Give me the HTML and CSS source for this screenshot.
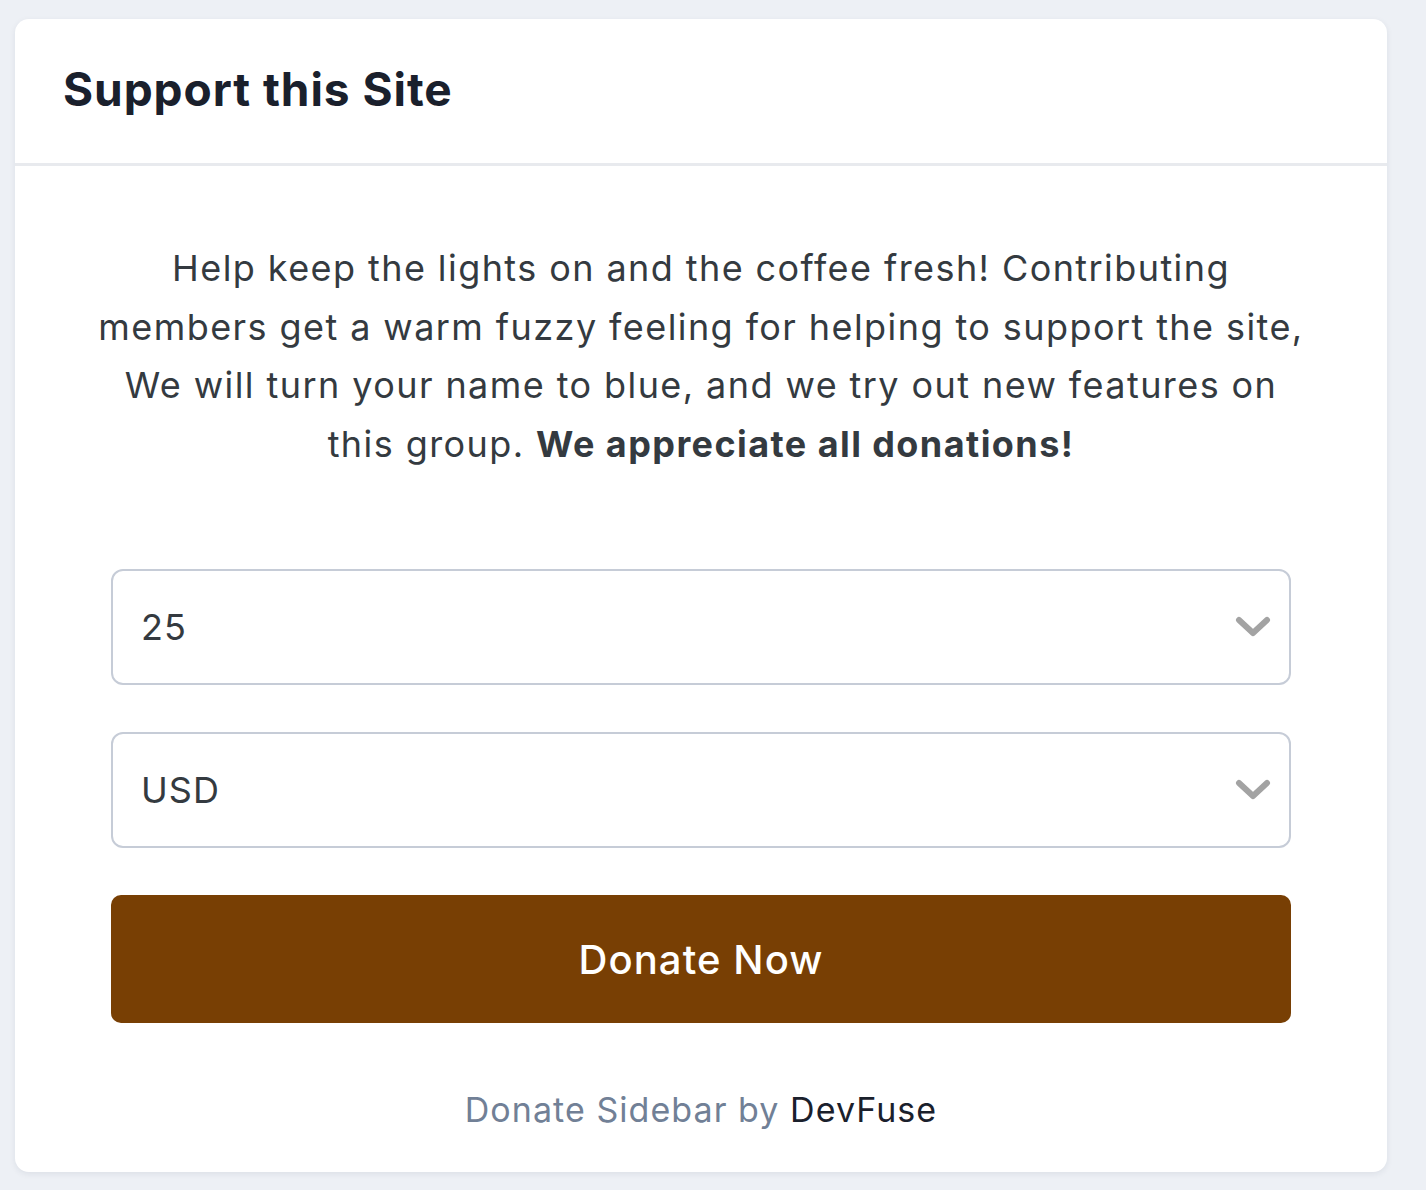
FILE: index.html
```html
<!DOCTYPE html>
<html>
<head>
<meta charset="utf-8">
<link rel="stylesheet" href="styles.css">
</head>
<body>
<div class="card">
  <div class="card-header">
    <h2 class="title">Support this Site</h2>
  </div>
  <div class="card-body">
    <p class="intro">Help keep the lights on and the coffee fresh! Contributing members get a warm fuzzy feeling for helping to support the site, We will turn your name to blue, and we try out new features on this group. <strong>We appreciate all donations!</strong></p>
    <div class="form">
      <div class="select">
        <span class="select-value">25</span>
        <svg class="chev" width="36" height="24" viewBox="0 0 36 24"><polyline points="4,5 18,18 32,5" fill="none" stroke="#a3a3a3" stroke-width="6" stroke-linecap="round" stroke-linejoin="round"/></svg>
      </div>
      <div class="select">
        <span class="select-value">USD</span>
        <svg class="chev" width="36" height="24" viewBox="0 0 36 24"><polyline points="4,5 18,18 32,5" fill="none" stroke="#a3a3a3" stroke-width="6" stroke-linecap="round" stroke-linejoin="round"/></svg>
      </div>
      <button class="donate">Donate Now</button>
    </div>
    <p class="credit">Donate Sidebar by <span class="brand">DevFuse</span></p>
  </div>
</div>
</body>
</html>
```
FILE: styles.css
```css
html, body {
  margin: 0;
  padding: 0;
  background: #edf0f5;
  font-family: Inter, "Noto Sans", sans-serif;
}
body {
  padding: 19px 0 19px 15px;
}
.card {
  width: 1372px;
  background: #ffffff;
  border-radius: 14px;
  box-shadow: 0 2px 6px rgba(30, 40, 60, 0.08);
  overflow: hidden;
}
.card-header {
  height: 147px;
  border-bottom: 3px solid #e8eaee;
  display: flex;
  align-items: center;
  padding-left: 48px;
  box-sizing: border-box;
}
.title {
  margin: 0;
  font-size: 46px;
  font-weight: 700;
  color: #1a202c;
  letter-spacing: 0.95px;
  line-height: 56px;
  padding-bottom: 4px;
}
.card-body {
  padding: 73px 0 0 0;
}
.intro {
  width: 1216px;
  margin: 0 auto;
  text-align: center;
  font-size: 36px;
  line-height: 58.5px;
  letter-spacing: 1.42px;
  color: #343a40;
}
.intro strong {
  font-weight: 700;
}
.form {
  margin: 96px 96px 0 96px;
  display: flex;
  flex-direction: column;
  gap: 47px;
}
.select {
  height: 116px;
  box-sizing: border-box;
  border: 2px solid #c6ccd7;
  border-radius: 12px;
  display: flex;
  align-items: center;
  justify-content: space-between;
  padding: 0 18px 0 28px;
}
.select-value {
  font-size: 36px;
  letter-spacing: 1px;
  color: #343a40;
}
.chev {
  display: block;
}
.donate {
  height: 128px;
  border: none;
  border-radius: 10px;
  background: #783f04;
  color: #ffffff;
  font-family: Inter, "Noto Sans", sans-serif;
  font-size: 40px;
  font-weight: 500;
  letter-spacing: 1.1px;
  cursor: pointer;
}
.credit {
  margin: 0;
  text-align: center;
  font-size: 34px;
  line-height: 58px;
  letter-spacing: 1.05px;
  padding: 58px 0 33px 0;
  color: #718096;
}
.brand {
  color: #1a202c;
}
```
